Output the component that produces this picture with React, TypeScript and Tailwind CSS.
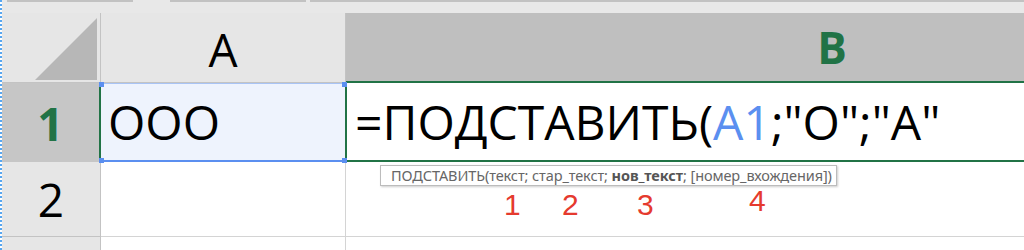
import React from 'react';

const GREEN = '#217346';

const App: React.FC = () => {
  return (
    <div className="relative w-[1024px] h-[250px] overflow-hidden bg-white border-l-2 border-dotted border-[#58a6ef] font-['Open_Sans','Noto_Sans',sans-serif]">
      {/* top strip */}
      <div className="h-[13px] bg-[#e8e8e8] flex items-start">
        <div className="w-[5px]" />
        <div className="w-[126px] h-[2px] bg-[#c2c2c2]" />
        <div className="w-[37px]" />
        <div className="w-[136px] h-[2px] bg-[#c2c2c2]" />
        <div className="w-[4px]" />
        <div className="flex-1 h-[2px] bg-[#c2c2c2]" />
      </div>

      {/* column headers */}
      <div className="flex h-[70px]">
        <div className="w-[99px] bg-[#e6e6e6] border-r border-b border-[#c3c3c3] flex items-end justify-end pr-[3px] pb-[2px]">
          <svg width="62" height="62" viewBox="0 0 62 62">
            <polygon points="0,62 62,62 62,0" fill="#b7b7b7" />
          </svg>
        </div>
        <div className="w-[245px] bg-[#e6e6e6] border-r border-b border-[#c3c3c3] flex items-center justify-center text-[46px] text-black leading-none pt-[2px]">
          A
        </div>
        <div className="flex-1 bg-[#bfbfbf] border-b-2 border-[#217346] flex items-center justify-center pl-[294px] text-[44px] font-bold leading-none" style={{ color: GREEN }}>
          B
        </div>
      </div>

      {/* row 1 */}
      <div className="flex h-[79px]">
        <div className="w-[99px] bg-[#c6c6c6] border-r-2 border-[#217346] flex items-center justify-center text-[46px] font-bold leading-none text-[#217346]">
          1
        </div>
        <div className="relative w-[244px] bg-[#eef3fd] border-t border-b-2 border-t-[#a9c4f5] border-b-[#5b8ff0] flex items-center pl-[7px] text-[48px] text-black leading-none">
          ООО
          <div className="absolute -left-[2px] -top-[2px] w-[5px] h-[5px] bg-[#5b8ff0]" />
          <div className="absolute -right-[2px] -top-[2px] w-[5px] h-[5px] bg-[#5b8ff0]" />
          <div className="absolute -left-[2px] -bottom-[3px] w-[5px] h-[5px] bg-[#5b8ff0]" />
          <div className="absolute -right-[2px] -bottom-[3px] w-[5px] h-[5px] bg-[#5b8ff0]" />
        </div>
        <div className="flex-1 bg-white border-l-2 border-b-2 border-[#217346] flex items-center pl-[8px] text-[48px] text-black leading-none whitespace-nowrap">
          <span>=ПОДСТАВИТЬ(</span>
          <span className="text-[#5b8ff0]">А1</span>
          <span>;"О";"А"</span>
        </div>
      </div>

      {/* row 2 */}
      <div className="flex h-[75px]">
        <div className="w-[99px] bg-[#e6e6e6] border-r border-b border-[#c3c3c3] flex items-center justify-center text-[46px] text-black leading-none">
          2
        </div>
        <div className="w-[245px] bg-white border-r border-b border-[#d4d4d4]" />
        <div className="flex-1 bg-white border-b border-[#d4d4d4]" />
      </div>

      {/* row 3 */}
      <div className="flex h-[13px]">
        <div className="w-[99px] bg-[#e6e6e6] border-r border-[#c3c3c3]" />
        <div className="w-[245px] bg-white border-r border-[#d4d4d4]" />
        <div className="flex-1 bg-white" />
      </div>

      {/* function tooltip */}
      <div className="absolute left-[378px] top-[165px] w-[457px] h-[21px] bg-white border border-[#bcbcbc] shadow-[1px_1px_2px_rgba(0,0,0,0.2)] pl-[10px] text-[14.5px] leading-[19px] tracking-[-0.1px] text-[#666] whitespace-nowrap font-['Noto_Sans',sans-serif]">
        <span>ПОДСТАВИТЬ(текст; стар_текст; </span>
        <span className="font-bold text-[#555]">нов_текст</span>
        <span>; [номер_вхождения])</span>
      </div>

      {/* annotations */}
      <div className="absolute top-[190px] left-[502px] text-[30px] leading-none text-[#e53a2e] font-['Liberation_Sans',sans-serif]">1</div>
      <div className="absolute top-[190px] left-[560px] text-[30px] leading-none text-[#e53a2e] font-['Liberation_Sans',sans-serif]">2</div>
      <div className="absolute top-[190px] left-[635px] text-[30px] leading-none text-[#e53a2e] font-['Liberation_Sans',sans-serif]">3</div>
      <div className="absolute top-[186px] left-[747px] text-[30px] leading-none text-[#e53a2e] font-['Liberation_Sans',sans-serif]">4</div>
    </div>
  );
};

export default App;
